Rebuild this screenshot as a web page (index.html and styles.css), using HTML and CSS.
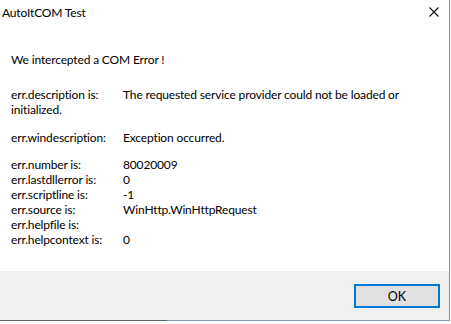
FILE: index.html
```html
<!DOCTYPE html>
<html>
<head>
<meta charset="utf-8">
<link rel="stylesheet" href="styles.css">
</head>
<body>
<div class="window">
  <div class="titlebar">
    <span class="title">AutoItCOM Test</span>
    <svg class="close" width="10" height="10" viewBox="0 0 10 10"><path d="M0.5 0.5 L9.5 9.5 M9.5 0.5 L0.5 9.5" stroke="#111" stroke-width="1.1" fill="none"/></svg>
  </div>
  <div class="content">
    <p class="line">We intercepted a COM Error !</p>
    <div class="rows desc">
      <span>err.description is:</span><span>The requested service provider could not be loaded or</span>
    </div>
    <p class="line">initialized.</p>
    <div class="rows wind">
      <span>err.windescription:</span><span>Exception occurred.</span>
    </div>
    <div class="rows list">
      <span>err.number is:</span><span>80020009</span>
      <span>err.lastdllerror is:</span><span>0</span>
      <span>err.scriptline is:</span><span>-1</span>
      <span>err.source is:</span><span>WinHttp.WinHttpRequest</span>
      <span>err.helpfile is:</span><span></span>
      <span>err.helpcontext is:</span><span>0</span>
    </div>
  </div>
  <div class="footer">
    <button class="ok">OK</button>
  </div>
  <div class="edge"></div>
</div>
</body>
</html>
```

FILE: styles.css
```css
html, body {
  margin: 0;
  padding: 0;
  background: #ffffff;
  width: 451px;
  height: 324px;
  overflow: hidden;
}
body {
  font-family: Lato, "Open Sans", sans-serif;
  font-size: 12px;
  letter-spacing: -0.15px;
  line-height: 15px;
  color: #000;
}
.window {
  width: 449px;
  height: 321px;
  border-right: 1px solid #7096c3;
  display: flex;
  flex-direction: column;
  background: #fff;
}
.titlebar {
  height: 30px;
  display: flex;
  justify-content: space-between;
  align-items: flex-start;
  flex: none;
}
.title {
  padding-left: 2px;
  padding-top: 5px;
}
.close {
  margin-top: 7px;
  margin-right: 10px;
}
.content {
  flex: 1;
  padding-left: 11px;
  padding-top: 22px;
}
.line {
  margin: 0;
}
.rows {
  display: grid;
  grid-template-columns: 112px auto;
}
.desc { margin-top: 20px; }
.wind { margin-top: 13px; }
.list { margin-top: 12px; }
.footer {
  flex: none;
  height: 49px;
  background: #f0f0f0;
  display: flex;
  justify-content: flex-end;
  align-items: flex-start;
  padding-right: 9px;
}
.ok {
  margin-top: 13px;
  width: 86px;
  height: 24px;
  border: 2px solid #0078d7;
  background: #e1e1e1;
  font-family: inherit;
  font-size: 12.5px;
  color: #000;
  padding: 0;
}
.edge {
  height: 1px;
  flex: none;
  background: linear-gradient(to right, #5b6068 0, #5b6068 167px, #7a9cc0 167px);
}
```
